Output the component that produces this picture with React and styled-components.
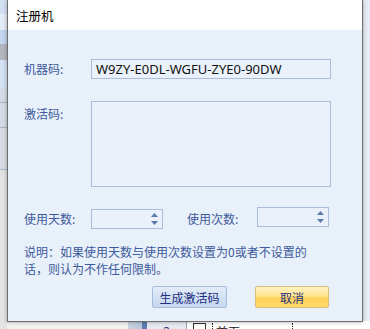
import React from 'react'
import styled, { createGlobalStyle } from 'styled-components'

const GlobalStyle = createGlobalStyle`
  html, body {
    margin: 0;
    padding: 0;
  }
  body {
    width: 370px;
    height: 329px;
    overflow: hidden;
    background: #ffffff;
    font-family: "Noto Sans", "Noto Sans CJK SC", sans-serif;
  }
`

const Desktop = styled.div`
  position: relative;
  width: 370px;
  height: 329px;
  overflow: hidden;
  display: flex;
`
const SidePane = styled.div`
  width: ${p => p.width}px;
  display: flex;
  flex-direction: column;
  flex-shrink: 0;
`
const Band = styled.div`
  height: ${p => p.h}px;
  flex-shrink: 0;
  background: ${p => p.bg};
  border-bottom: ${p => (p.line ? `1px solid ${p.line}` : 'none')};
  box-sizing: border-box;
`
const Middle = styled.div`
  flex: 1;
  display: flex;
  flex-direction: column;
`
const Workspace = styled.div`
  height: 321px;
  flex-shrink: 0;
  background: #e9eef6;
`
const TableRow = styled.div`
  height: 20px;
  display: flex;
  align-items: flex-start;
  background: #f3f3f3;
  font-size: 12px;
  color: #223377;
`
const RowBlank = styled.div`
  width: 121px;
`
const RowHeader = styled.div`
  width: 14px;
  height: 20px;
  background: linear-gradient(90deg, #c9d3e2, #b8c6dc);
  border-right: 5px solid #5b7bb2;
`
const RowNum = styled.div`
  width: 40px;
  height: 20px;
  background: #e6eaf0;
  border-right: 1px solid #9aa4b4;
  text-align: center;
  padding-top: 2px;
  box-sizing: border-box;
`
const RowBody = styled.div`
  flex: 1;
  height: 20px;
  background: #ffffff;
  display: flex;
  align-items: flex-start;
  padding-top: 2px;
  box-sizing: border-box;
`
const CheckBox = styled.div`
  width: 11px;
  height: 11px;
  border: 1px solid #333;
  margin-left: 6px;
  background: #fff;
`
const DottedCell = styled.div`
  width: ${p => p.width}px;
  height: 20px;
  margin-left: ${p => p.ml || 0}px;
  border-left: 1px dotted #222;
  padding-left: 3px;
  box-sizing: border-box;
  color: #111;
`

const Dialog = styled.div`
  position: absolute;
  left: 7px;
  top: 0;
  width: 356px;
  height: 322px;
  box-sizing: border-box;
  border: 1px solid #6e6e6e;
  border-top: none;
  background: #e8f0fa;
  box-shadow: 0 0 4px rgba(0, 0, 0, 0.35);
  display: flex;
  flex-direction: column;
`
const TitleBar = styled.div`
  height: 30px;
  flex-shrink: 0;
  background: #ffffff;
  display: flex;
  align-items: center;
  padding-left: 8px;
  font-family: "Noto Sans CJK SC", sans-serif;
  font-size: 12.5px;
  color: #000;
`
const Body = styled.div`
  padding: 29px 30px 0 16px;
  display: grid;
  grid-template-columns: 67px 240px;
  row-gap: 22px;
  font-family: "Noto Sans CJK SC", sans-serif;
  font-size: 12px;
  color: #3d5a9b;
`
const Label = styled.div`
  line-height: 20px;
  margin-top: ${p => p.mt || 0}px;
`
const Field = styled.div`
  height: ${p => p.h}px;
  box-sizing: border-box;
  border: 1px solid #abbdd8;
  background: #eaf1fa;
  display: flex;
  align-items: center;
  padding-left: 4px;
  font-family: "Noto Sans", sans-serif;
  font-size: 13px;
  color: #111;
`
const CountsRow = styled.div`
  grid-column: 1 / span 2;
  display: flex;
  align-items: center;
`
const CountLabel = styled.div`
  width: ${p => p.width}px;
  line-height: 20px;
`
const Spinner = styled.div`
  width: 72px;
  height: 20px;
  box-sizing: border-box;
  border: 1px solid #abbdd8;
  background: #eaf1fa;
  display: flex;
  justify-content: flex-end;
  position: relative;
  top: ${p => p.shift || 0}px;
`
const Arrows = styled.div`
  width: 16px;
  display: flex;
  flex-direction: column;
  justify-content: space-between;
  align-items: center;
  padding: 3px 0 3px;
`
const Note = styled.div`
  width: 290px;
  padding: 14px 0 0 16px;
  font-family: "Noto Sans CJK SC", sans-serif;
  font-size: 12px;
  line-height: 17px;
  color: #3d5a9b;
`
const Actions = styled.div`
  display: flex;
  padding: 9px 0 0 144px;
  gap: 28px;
`
const Button = styled.button`
  width: ${p => p.width}px;
  height: 22px;
  padding: 0;
  border-radius: 2px;
  font-family: "Noto Sans CJK SC", sans-serif;
  font-size: 12px;
  color: #1f2f80;
  border: 1px solid ${p => (p.primary ? '#d7bd7a' : '#a6bde0')};
  background: ${p =>
    p.primary
      ? 'linear-gradient(#fff2c2 0%, #ffe48e 45%, #ffd35c 55%, #fed867 100%)'
      : 'linear-gradient(#e3ecf8 0%, #d3e1f3 50%, #c7d8ef 100%)'};
`

const Tri = ({ down }) => (
  <svg width="7" height="4" viewBox="0 0 7 4">
    <polygon points={down ? '0,0 7,0 3.5,4' : '0,4 7,4 3.5,0'} fill="#5b79ad" />
  </svg>
)

const NumberBox = ({ shift }) => (
  <Spinner shift={shift}>
    <Arrows>
      <Tri />
      <Tri down />
    </Arrows>
  </Spinner>
)

export default function App() {
  return (
    <Desktop>
      <GlobalStyle />
      <SidePane width={7}>
        <Band h={14} bg="#d3e0f2" />
        <Band h={16} bg="#e4ecf7" />
        <Band h={14} bg="#c2d6f0" />
        <Band h={16} bg="#b3b7bd" />
        <Band h={28} bg="#d3e1f4" />
        <Band h={15} bg="#d6dce5" line="#a9b6c8" />
        <Band h={25} bg="#d6dce5" line="#a9b6c8" />
        <Band h={42} bg="#d8dde5" line="#a9b6c8" />
        <Band h={160} bg="#e3e3e3" />
      </SidePane>
      <Middle>
        <Workspace />
        <TableRow>
          <RowBlank />
          <RowHeader />
          <RowNum>2</RowNum>
          <RowBody>
            <CheckBox />
            <DottedCell width={80} ml={6}>首页</DottedCell>
            <DottedCell width={80} />
          </RowBody>
        </TableRow>
      </Middle>
      <SidePane width={8}>
        <Band h={10} bg="#a9c1e4" />
        <Band h={50} bg="#c6d9f1" />
        <Band h={15} bg="#d3dae3" line="#a8b5c7" />
        <Band h={20} bg="#d3dae3" line="#a8b5c7" />
        <Band h={18} bg="#d3dae3" line="#a8b5c7" />
        <Band h={20} bg="#d3dae3" line="#a8b5c7" />
        <Band h={10} bg="#d3dae3" line="#a8b5c7" />
        <Band h={20} bg="#d3dae3" line="#a8b5c7" />
        <Band h={59} bg="#d6dce4" line="#777777" />
        <Band h={68} bg="#eaebed" />
        <Band h={15} bg="#f5f3d8" />
        <Band h={24} bg="#ffffff" />
      </SidePane>

      <Dialog>
        <TitleBar>注册机</TitleBar>
        <Body>
          <Label>机器码:</Label>
          <Field h={20}>W9ZY-E0DL-WGFU-ZYE0-90DW</Field>
          <Label mt={3}>激活码:</Label>
          <Field h={86} />
          <CountsRow>
            <CountLabel width={67}>使用天数:</CountLabel>
            <NumberBox />
            <CountLabel width={70} style={{ marginLeft: 24 }}>使用次数:</CountLabel>
            <NumberBox shift={-2} />
          </CountsRow>
        </Body>
        <Note>说明：如果使用天数与使用次数设置为0或者不设置的话，则认为不作任何限制。</Note>
        <Actions>
          <Button width={75}>生成激活码</Button>
          <Button width={74} primary>取消</Button>
        </Actions>
      </Dialog>
    </Desktop>
  )
}
